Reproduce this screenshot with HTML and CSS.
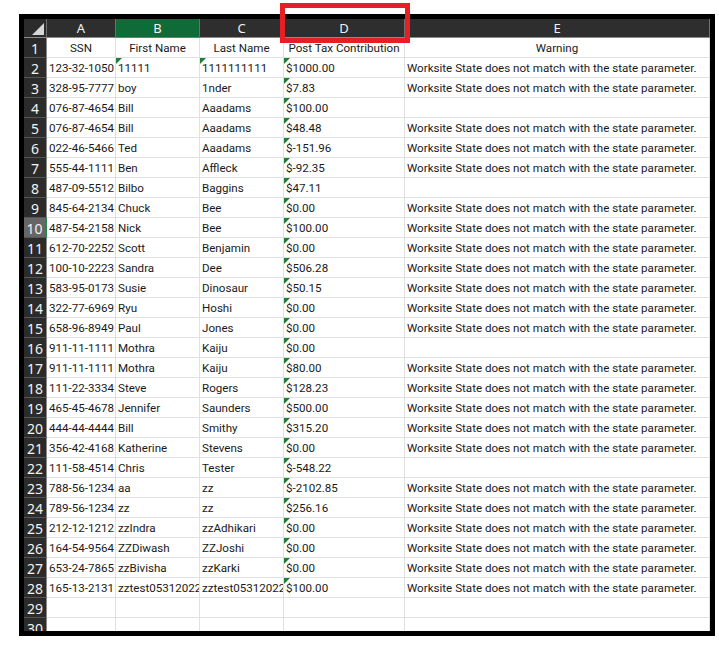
FILE: index.html
```html
<!DOCTYPE html>
<html lang="en">
<head>
  <meta charset="UTF-8">
  <title>Contributions</title>
  <link rel="stylesheet" href="styles.css">
</head>
<body>
  <div class="frame">
    <div class="sheet" id="sheet">
      <div class="corner"><svg width="12" height="12" viewBox="0 0 12 12"><polygon points="12,0 12,12 0,12" fill="#d6d6d6"/></svg></div>
      <div class="colhead">A</div>
      <div class="colhead selected">B</div>
      <div class="colhead">C</div>
      <div class="colhead">D</div>
      <div class="colhead">E</div>
    </div>
  </div>
  <div class="callout"></div>

<script>
const W = "Worksite State does not match with the state parameter.";
const rows = [
  ["123-32-1050", "11111", "1111111111", "$1000.00", W],
  ["328-95-7777", "boy", "1nder", "$7.83", W],
  ["076-87-4654", "Bill", "Aaadams", "$100.00", ""],
  ["076-87-4654", "Bill", "Aaadams", "$48.48", W],
  ["022-46-5466", "Ted", "Aaadams", "$-151.96", W],
  ["555-44-1111", "Ben", "Affleck", "$-92.35", W],
  ["487-09-5512", "Bilbo", "Baggins", "$47.11", ""],
  ["845-64-2134", "Chuck", "Bee", "$0.00", W],
  ["487-54-2158", "Nick", "Bee", "$100.00", W],
  ["612-70-2252", "Scott", "Benjamin", "$0.00", W],
  ["100-10-2223", "Sandra", "Dee", "$506.28", W],
  ["583-95-0173", "Susie", "Dinosaur", "$50.15", W],
  ["322-77-6969", "Ryu", "Hoshi", "$0.00", W],
  ["658-96-8949", "Paul", "Jones", "$0.00", W],
  ["911-11-1111", "Mothra", "Kaiju", "$0.00", ""],
  ["911-11-1111", "Mothra", "Kaiju", "$80.00", W],
  ["111-22-3334", "Steve", "Rogers", "$128.23", W],
  ["465-45-4678", "Jennifer", "Saunders", "$500.00", W],
  ["444-44-4444", "Bill", "Smithy", "$315.20", W],
  ["356-42-4168", "Katherine", "Stevens", "$0.00", W],
  ["111-58-4514", "Chris", "Tester", "$-548.22", ""],
  ["788-56-1234", "aa", "zz", "$-2102.85", W],
  ["789-56-1234", "zz", "zz", "$256.16", W],
  ["212-12-1212", "zzIndra", "zzAdhikari", "$0.00", W],
  ["164-54-9564", "ZZDiwash", "ZZJoshi", "$0.00", W],
  ["653-24-7865", "zzBivisha", "zzKarki", "$0.00", W],
  ["165-13-2131", "zztest05312022", "zztest05312022", "$100.00", W],
  ["", "", "", "", ""],
  ["", "", "", "", ""]
];
const titles = ["SSN", "First Name", "Last Name", "Post Tax Contribution", "Warning"];
const sheet = document.getElementById("sheet");

function addCell(text, cls) {
  const d = document.createElement("div");
  d.className = cls;
  d.textContent = text;
  sheet.appendChild(d);
}

// row 1: headings, centred
addCell("1", "rowhead");
titles.forEach(t => addCell(t, "cell title"));

rows.forEach((r, i) => {
  const n = i + 2;
  addCell(String(n), n === 10 ? "rowhead selected" : "rowhead");
  r.forEach((v, c) => {
    // numbers stored as text get the green corner flag
    const flagged = v && (c === 3 || (n === 2 && (c === 1 || c === 2)));
    addCell(v, flagged ? "cell flag" : "cell");
  });
});
</script>
</body>
</html>
```

FILE: styles.css
```css
body {
  margin: 0; background: #fff;
  font-family: 'Roboto', sans-serif;
}
.frame {
  margin: 14px 0 0 19px;
  width: 686px; height: 612px;
  border: 5px solid #000;
  overflow: hidden;
}
.sheet {
  display: grid;
  grid-template-columns: 23px 69px 84px 84px 121px 305px;
  grid-template-rows: 19px;
  grid-auto-rows: 20px;
}
.sheet > div { box-sizing: border-box; }
.corner {
  background: #2b2b2b;
  border-right: 1px solid #6e6e6e; border-bottom: 1px solid #8a8a8a;
  display: flex; align-items: flex-end; justify-content: flex-end;
  padding: 0 2px 2px 0;
}
.corner svg { display: block; }
.colhead {
  background: #2e2e2e; color: #f2f2f2;
  font-family: 'Noto Sans', sans-serif;
  font-size: 13px; line-height: 19px; text-align: center;
  border-right: 1px solid #6e6e6e; border-bottom: 1px solid #8a8a8a;
}
.colhead.selected { background: #0f6b37; border-bottom-color: #3d9a62; }
.rowhead {
  background: #2b2b2b; color: #f2f2f2;
  font-family: 'Noto Sans', sans-serif;
  font-size: 14px; line-height: 20px; text-align: center;
  border-bottom: 1px solid #555; border-right: 1px solid #8a8a8a;
  padding-top: 1px;
}
.rowhead.selected { background: #666; border-right: 2px solid #1f8a4c; }
.cell {
  position: relative;
  color: #1a1a1a; font-size: 11.6px; line-height: 19px;
  padding: 1px 0 0 2px; white-space: nowrap; overflow: hidden;
  border-right: 1px solid #e1e1e1; border-bottom: 1px solid #e1e1e1;
}
.cell.title { text-align: center; padding-left: 0; }
.flag::before {
  content: ""; position: absolute; top: 0; left: 0;
  border-top: 6px solid #1e7e34; border-right: 6px solid transparent;
}
.callout {
  position: absolute; left: 280px; top: 3px;
  width: 120px; height: 30px;
  border: 5px solid #e81e25;
}
```
